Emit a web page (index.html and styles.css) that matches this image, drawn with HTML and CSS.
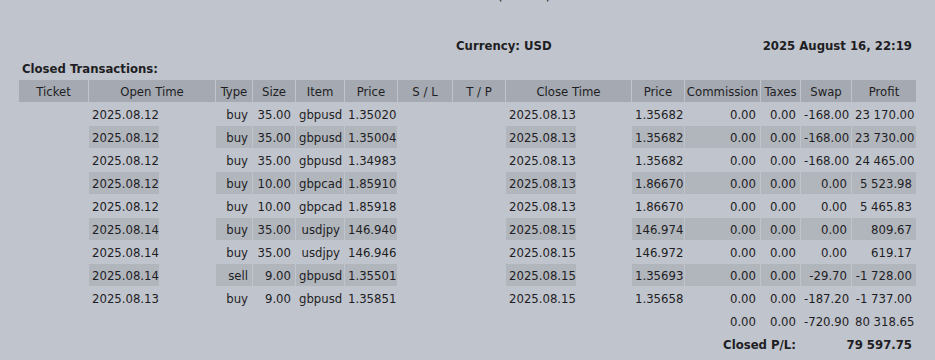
FILE: index.html
```html
<!DOCTYPE html>
<html>
<head>
<meta charset="utf-8">
<link rel="stylesheet" href="styles.css">
</head>
<body>
<div class="page">
  <div class="title">(Demo)</div>
  <table class="report">
    <colgroup>
      <col class="c-ticket"><col class="c-date"><col class="c-time"><col class="c-type"><col class="c-size"><col class="c-item"><col class="c-price"><col class="c-sl"><col class="c-tp"><col class="c-date"><col class="c-time2"><col class="c-price"><col class="c-comm"><col class="c-tax"><col class="c-swap"><col class="c-profit">
    </colgroup>
    <tr class="info"><td colspan="16"></td></tr>
    <tr class="info">
      <td colspan="8"></td>
      <td colspan="4" class="b left">Currency: USD</td>
      <td colspan="4" class="b right">2025 August 16, 22:19</td>
    </tr>
    <tr class="info"><td colspan="16" class="b left">Closed Transactions:</td></tr>
    <tr class="head">
      <td>Ticket</td><td colspan="2">Open Time</td><td>Type</td><td>Size</td><td>Item</td><td>Price</td><td>S / L</td><td>T / P</td><td colspan="2">Close Time</td><td>Price</td><td>Commission</td><td>Taxes</td><td>Swap</td><td>Profit</td>
    </tr>
    <tr><td></td><td class="left">2025.08.12</td><td></td><td>buy</td><td>35.00</td><td>gbpusd</td><td>1.35020</td><td></td><td></td><td class="left">2025.08.13</td><td></td><td class="left">1.35682</td><td>0.00</td><td>0.00</td><td>-168.00</td><td>23 170.00</td></tr>
    <tr class="alt"><td></td><td class="left">2025.08.12</td><td></td><td>buy</td><td>35.00</td><td>gbpusd</td><td>1.35004</td><td></td><td></td><td class="left">2025.08.13</td><td></td><td class="left">1.35682</td><td>0.00</td><td>0.00</td><td>-168.00</td><td>23 730.00</td></tr>
    <tr><td></td><td class="left">2025.08.12</td><td></td><td>buy</td><td>35.00</td><td>gbpusd</td><td>1.34983</td><td></td><td></td><td class="left">2025.08.13</td><td></td><td class="left">1.35682</td><td>0.00</td><td>0.00</td><td>-168.00</td><td>24 465.00</td></tr>
    <tr class="alt"><td></td><td class="left">2025.08.12</td><td></td><td>buy</td><td>10.00</td><td>gbpcad</td><td>1.85910</td><td></td><td></td><td class="left">2025.08.13</td><td></td><td class="left">1.86670</td><td>0.00</td><td>0.00</td><td>0.00</td><td>5 523.98</td></tr>
    <tr><td></td><td class="left">2025.08.12</td><td></td><td>buy</td><td>10.00</td><td>gbpcad</td><td>1.85918</td><td></td><td></td><td class="left">2025.08.13</td><td></td><td class="left">1.86670</td><td>0.00</td><td>0.00</td><td>0.00</td><td>5 465.83</td></tr>
    <tr class="alt"><td></td><td class="left">2025.08.14</td><td></td><td>buy</td><td>35.00</td><td>usdjpy</td><td>146.940</td><td></td><td></td><td class="left">2025.08.15</td><td></td><td class="left">146.974</td><td>0.00</td><td>0.00</td><td>0.00</td><td>809.67</td></tr>
    <tr><td></td><td class="left">2025.08.14</td><td></td><td>buy</td><td>35.00</td><td>usdjpy</td><td>146.946</td><td></td><td></td><td class="left">2025.08.15</td><td></td><td class="left">146.972</td><td>0.00</td><td>0.00</td><td>0.00</td><td>619.17</td></tr>
    <tr class="alt"><td></td><td class="left">2025.08.14</td><td></td><td>sell</td><td>9.00</td><td>gbpusd</td><td>1.35501</td><td></td><td></td><td class="left">2025.08.15</td><td></td><td class="left">1.35693</td><td>0.00</td><td>0.00</td><td>-29.70</td><td>-1 728.00</td></tr>
    <tr><td></td><td class="left">2025.08.13</td><td></td><td>buy</td><td>9.00</td><td>gbpusd</td><td>1.35851</td><td></td><td></td><td class="left">2025.08.15</td><td></td><td class="left">1.35658</td><td>0.00</td><td>0.00</td><td>-187.20</td><td>-1 737.00</td></tr>
    <tr><td colspan="12"></td><td>0.00</td><td>0.00</td><td>-720.90</td><td>80 318.65</td></tr>
    <tr><td colspan="12"></td><td colspan="2" class="b">Closed P/L:</td><td colspan="2" class="b">79 597.75</td></tr>
  </table>
</div>
</body>
</html>
```

FILE: styles.css
```css
html, body {
  margin: 0;
  padding: 0;
  background: #c0c4cc;
}
body {
  font-family: "DejaVu Sans Condensed", "DejaVu Sans", sans-serif;
  font-size: 13px;
  color: #1e1e24;
}
.page {
  padding: 0 0 0 18px;
}
.title {
  margin-top: -16px;
  height: 20px;
  line-height: 20px;
  font-size: 16px;
  padding-left: 479px;
}
.report {
  table-layout: fixed;
  border-collapse: separate;
  border-spacing: 1px;
  empty-cells: hide;
  width: 899px;
  margin-top: 6px;
}
.report td {
  height: 22px;
  padding: 0 4px 0 3px;
  text-align: right;
  white-space: nowrap;
  overflow: hidden;
}
.c-ticket { width: 69px; }
.c-date { width: 70px; }
.c-time { width: 55px; }
.c-time2 { width: 54px; }
.c-type { width: 36px; }
.c-size { width: 42px; }
.c-item { width: 48px; }
.c-price { width: 52px; }
.c-sl { width: 54px; }
.c-tp { width: 52px; }
.c-comm { width: 75px; }
.c-tax { width: 39px; }
.c-swap { width: 50px; }
.c-profit { width: 64px; }
.report .left { text-align: left; }
.report .right { text-align: right; }
.b { font-weight: bold; }
.head td {
  background: #a5a9b1;
  text-align: center;
  padding: 0;
}
.alt td { background: #b1b5bc; }
```
